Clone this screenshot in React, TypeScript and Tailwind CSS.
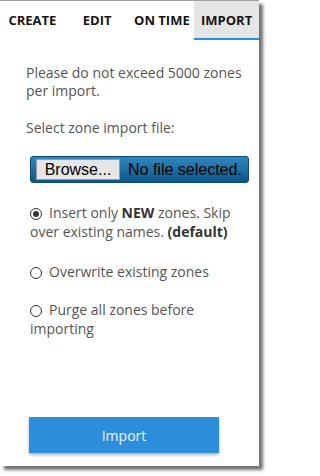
import React from 'react'

const tabs = ['CREATE', 'EDIT', 'ON TIME', 'IMPORT']

function Radio({ checked }: { checked?: boolean }) {
  return (
    <span className="relative mr-[7px] inline-block h-[12px] w-[12px] translate-y-[1px] rounded-full border border-[#333] bg-white align-[-1px]">
      {checked && <span className="absolute left-[2px] top-[2px] h-[6px] w-[6px] rounded-full bg-[#333]" />}
    </span>
  )
}

export default function App() {
  return (
    <div className="h-[476px] w-[269px] bg-white" style={{ fontFamily: '"Open Sans", sans-serif' }}>
      <div className="flex h-[466px] w-[259px] flex-col border-t border-[#a0a0a0] bg-white shadow-[4px_4px_3px_rgba(0,0,0,0.55)]">
        <div className="grid h-[39px] grid-cols-4">
          {tabs.map((t) => (
            <div
              key={t}
              className={`flex items-center justify-center text-[13px] font-bold text-[#151515] ${
                t === 'IMPORT' ? 'border-b-2 border-[#2d8fdb] bg-[#e5e5e5] pt-[2px]' : ''
              }`}
            >
              {t}
            </div>
          ))}
        </div>

        <div className="flex flex-col pl-[26px] pr-[10px] text-[14px] text-[#555]">
          <p className="mt-[24px] leading-[18px]">Please do not exceed 5000 zones per import.</p>
          <p className="mt-[19px] leading-[18px]">Select zone import file:</p>

          <div className="ml-[4px] mt-[19px] flex h-[27px] w-[219px] items-center rounded-[3px] border border-[#0b4a74] bg-gradient-to-b from-[#2e88c0] to-[#0c5686] px-[5px]" style={{ fontFamily: '"Liberation Sans", Arial, sans-serif' }}>
            <span className="flex h-[21px] w-[84px] items-center justify-center border border-[#9a9a9a] bg-[#e6e6e6] text-[16px] text-black">
              Browse...
            </span>
            <span className="ml-[8px] text-[16px] text-black">No file selected.</span>
          </div>

          <label className="ml-[4px] mt-[20px] block leading-[19px]">
            <Radio checked />
            Insert only <b className="text-[#333]">NEW</b> zones. Skip over existing names.{' '}
            <b className="text-[#333]">(default)</b>
          </label>
          <label className="ml-[4px] mt-[21px] block leading-[19px]">
            <Radio />
            Overwrite existing zones
          </label>
          <label className="ml-[4px] mt-[19px] block leading-[19px]">
            <Radio />
            Purge all zones before importing
          </label>

          <button className="ml-[3px] mt-[79px] h-[36px] w-[190px] bg-[#2d8fdb] text-[14px] text-[#f0f4fa] shadow-[0_2px_3px_rgba(0,0,0,0.3)]">
            Import
          </button>
        </div>
      </div>
    </div>
  )
}
